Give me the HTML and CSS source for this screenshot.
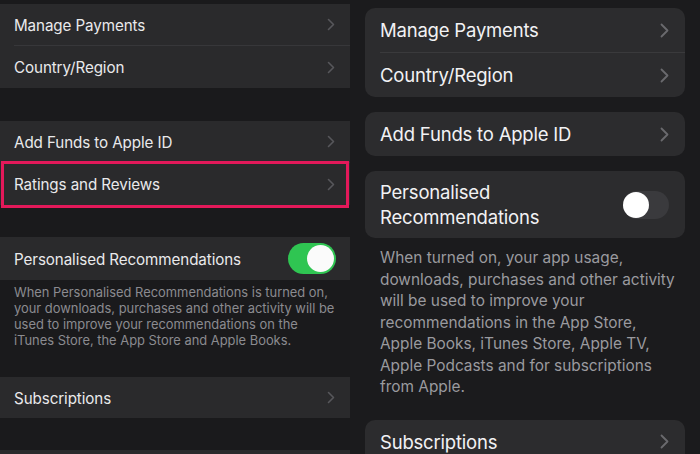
FILE: index.html
```html
<!DOCTYPE html>
<html>
<head>
<meta charset="utf-8">
<link rel="stylesheet" href="styles.css">
</head>
<body>
<div class="screen">
  <div class="left">
    <div class="lgroup">
      <div class="lrow"><span class="ltext">Manage Payments</span><svg class="lchev" viewBox="0 0 8 13"><path d="M1.5 1.5 L6.5 6.5 L1.5 11.5"/></svg></div>
      <div class="lsep"></div>
      <div class="lrow"><span class="ltext">Country/Region</span><svg class="lchev" viewBox="0 0 8 13"><path d="M1.5 1.5 L6.5 6.5 L1.5 11.5"/></svg></div>
    </div>
    <div class="lgroup lgap1">
      <div class="lrow"><span class="ltext">Add Funds to Apple ID</span><svg class="lchev" viewBox="0 0 8 13"><path d="M1.5 1.5 L6.5 6.5 L1.5 11.5"/></svg></div>
      <div class="lsep"></div>
      <div class="lrow highlight"><span class="ltext">Ratings and Reviews</span><svg class="lchev" viewBox="0 0 8 13"><path d="M1.5 1.5 L6.5 6.5 L1.5 11.5"/></svg></div>
    </div>
    <div class="lgroup lgap2">
      <div class="lrow ltall"><span class="ltext">Personalised Recommendations</span><span class="ltoggle"><span class="lknob"></span></span></div>
    </div>
    <p class="lfoot">When Personalised Recommendations is turned on,<br>your downloads, purchases and other activity will be<br>used to improve your recommendations on the<br>iTunes Store, the App Store and Apple Books.</p>
    <div class="lgroup">
      <div class="lrow"><span class="ltext">Subscriptions</span><svg class="lchev" viewBox="0 0 8 13"><path d="M1.5 1.5 L6.5 6.5 L1.5 11.5"/></svg></div>
    </div>
    <div class="lgroup lgap3">
      <div class="lrow"></div>
    </div>
  </div>
  <div class="right">
    <div class="card">
      <div class="rrow"><span class="rtext">Manage Payments</span><svg class="rchev" viewBox="0 0 9 15"><path d="M1.5 1.5 L7.5 7.5 L1.5 13.5"/></svg></div>
      <div class="rsep"></div>
      <div class="rrow"><span class="rtext">Country/Region</span><svg class="rchev" viewBox="0 0 9 15"><path d="M1.5 1.5 L7.5 7.5 L1.5 13.5"/></svg></div>
    </div>
    <div class="card">
      <div class="rrow"><span class="rtext">Add Funds to Apple ID</span><svg class="rchev" viewBox="0 0 9 15"><path d="M1.5 1.5 L7.5 7.5 L1.5 13.5"/></svg></div>
    </div>
    <div class="card">
      <div class="rrow rtall"><span class="rtext rwrap">Personalised Recommendations</span><span class="rtoggle"><span class="rknob"></span></span></div>
    </div>
    <p class="rfoot">When turned on, your app usage,<br>downloads, purchases and other activity<br>will be used to improve your<br>recommendations in the App Store,<br>Apple Books, iTunes Store, Apple TV,<br>Apple Podcasts and for subscriptions<br>from Apple.</p>
    <div class="card rlast">
      <div class="rrow"><span class="rtext">Subscriptions</span><svg class="rchev" viewBox="0 0 9 15"><path d="M1.5 1.5 L7.5 7.5 L1.5 13.5"/></svg></div>
    </div>
  </div>
</div>
</body>
</html>
```
FILE: styles.css
```css
html, body {
  margin: 0;
  padding: 0;
  background: #1b1b1d;
}
body {
  font-family: Inter, "Liberation Sans", sans-serif;
  -webkit-font-smoothing: antialiased;
}
.screen {
  display: flex;
  width: 700px;
  height: 454px;
  overflow: hidden;
}
.left {
  width: 350px;
  flex: none;
  background: #1a1a1c;
  padding-top: 4px;
  box-sizing: border-box;
}
.lgroup {
  background: #2a2a2c;
  display: flex;
  flex-direction: column;
}
.lgap1 { margin-top: 33px; }
.lgap2 { margin-top: 32px; }
.lgap3 { margin-top: 32px; }
.lrow {
  height: 41px;
  display: flex;
  align-items: center;
  justify-content: space-between;
  padding: 0 14px 0 14px;
  position: relative;
}
.lrow + .lsep + .lrow { height: 42px; }
.ltall { height: 43px; }
.lsep {
  height: 1px;
  background: #37373a;
  margin-left: 14px;
}
.ltext {
  color: #e9e9eb;
  font-size: 15.2px;
  letter-spacing: -0.1px;
  padding-top: 1px;
}
.lchev {
  width: 8px;
  height: 13px;
  fill: none;
  stroke: #57575b;
  stroke-width: 1.6;
  stroke-linecap: round;
  stroke-linejoin: round;
  margin-right: 1px;
}
.highlight::after {
  content: "";
  position: absolute;
  left: 1px;
  right: 1px;
  top: -2px;
  bottom: -3px;
  border: 3px solid #e3195a;
  pointer-events: none;
}
.ltoggle {
  width: 48px;
  height: 31px;
  border-radius: 16px;
  background: #2fc552;
  display: flex;
  align-items: center;
  justify-content: flex-end;
  padding: 0 2px;
  box-sizing: border-box;
}
.lknob {
  width: 27px;
  height: 27px;
  border-radius: 50%;
  background: #fbfbfb;
}
.lfoot {
  margin: 0;
  padding: 5px 0 28px 14px;
  color: #8b8b90;
  font-size: 12.9px;
  line-height: 16px;
  white-space: nowrap;
}
.right {
  width: 350px;
  flex: none;
  background: #1b1b1d;
  padding: 8px 15px 0 15px;
  box-sizing: border-box;
  display: flex;
  flex-direction: column;
}
.card {
  background: #2c2c2e;
  border-radius: 10px;
  display: flex;
  flex-direction: column;
  margin-bottom: 15px;
  flex: none;
}
.rrow {
  height: 44px;
  display: flex;
  align-items: center;
  justify-content: space-between;
  padding: 0 16px 0 15px;
}
.rtall {
  height: 67px;
}
.rsep {
  height: 1px;
  background: #3a3a3c;
  margin-left: 15px;
}
.rtext {
  color: #f2f2f4;
  font-size: 18.5px;
  letter-spacing: -0.2px;
}
.rwrap {
  width: 200px;
  line-height: 25px;
}
.rchev {
  width: 9px;
  height: 15px;
  fill: none;
  stroke: #6a6a6e;
  stroke-width: 1.8;
  stroke-linecap: round;
  stroke-linejoin: round;
}
.rtoggle {
  width: 46px;
  height: 28px;
  border-radius: 14px;
  background: #3a3a3d;
  display: flex;
  align-items: center;
  justify-content: flex-start;
  padding: 0 1px;
  box-sizing: border-box;
}
.rknob {
  width: 26px;
  height: 26px;
  border-radius: 50%;
  background: #ffffff;
  margin-left: -1px;
}
.rfoot {
  margin: -6px 0 0 0;
  padding: 0 0 22px 15px;
  color: #9a9a9f;
  font-size: 15.4px;
  line-height: 21.5px;
  white-space: nowrap;
}
```
